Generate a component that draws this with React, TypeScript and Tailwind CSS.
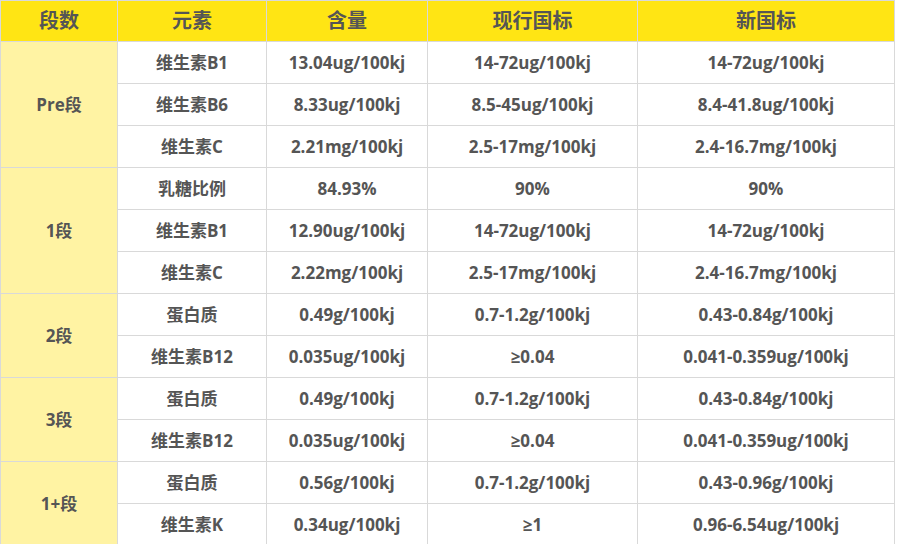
import React from "react";

type Group = {
  stage: string;
  rows: [string, string, string, string][];
};

const groups: Group[] = [
  {
    stage: "Pre段",
    rows: [
      ["维生素B1", "13.04ug/100kj", "14-72ug/100kj", "14-72ug/100kj"],
      ["维生素B6", "8.33ug/100kj", "8.5-45ug/100kj", "8.4-41.8ug/100kj"],
      ["维生素C", "2.21mg/100kj", "2.5-17mg/100kj", "2.4-16.7mg/100kj"],
    ],
  },
  {
    stage: "1段",
    rows: [
      ["乳糖比例", "84.93%", "90%", "90%"],
      ["维生素B1", "12.90ug/100kj", "14-72ug/100kj", "14-72ug/100kj"],
      ["维生素C", "2.22mg/100kj", "2.5-17mg/100kj", "2.4-16.7mg/100kj"],
    ],
  },
  {
    stage: "2段",
    rows: [
      ["蛋白质", "0.49g/100kj", "0.7-1.2g/100kj", "0.43-0.84g/100kj"],
      ["维生素B12", "0.035ug/100kj", "≥0.04", "0.041-0.359ug/100kj"],
    ],
  },
  {
    stage: "3段",
    rows: [
      ["蛋白质", "0.49g/100kj", "0.7-1.2g/100kj", "0.43-0.84g/100kj"],
      ["维生素B12", "0.035ug/100kj", "≥0.04", "0.041-0.359ug/100kj"],
    ],
  },
  {
    stage: "1+段",
    rows: [
      ["蛋白质", "0.56g/100kj", "0.7-1.2g/100kj", "0.43-0.96g/100kj"],
      ["维生素K", "0.34ug/100kj", "≥1", "0.96-6.54ug/100kj"],
    ],
  },
];

const headers = ["段数", "元素", "含量", "现行国标", "新国标"];

export default function App() {
  return (
    <div className="bg-white w-[897px] h-[544px] overflow-hidden font-['Open_Sans','Noto_Sans_CJK_SC',sans-serif] text-[#555555]">
      <table className="table-fixed border-collapse w-[894px] font-bold">
        <colgroup>
          <col className="w-[117px]" />
          <col className="w-[149px]" />
          <col className="w-[161px]" />
          <col className="w-[210px]" />
          <col className="w-[257px]" />
        </colgroup>
        <thead>
          <tr className="h-[41px] bg-[#ffe514]">
            {headers.map((h) => (
              <th key={h} className="border border-[#d9d9d9] p-0 text-[20px] font-bold text-center align-middle leading-none">
                {h}
              </th>
            ))}
          </tr>
        </thead>
        <tbody>
          {groups.map((g) =>
            g.rows.map((r, i) => (
              <tr key={g.stage + i} className="h-[42px]">
                {i === 0 && (
                  <td rowSpan={g.rows.length} className="border border-[#d9d9d9] p-0 bg-[#fff3a3] text-center align-middle text-[17px] leading-none">
                    {g.stage}
                  </td>
                )}
                {r.map((c, j) => (
                  <td key={j} className="border border-[#d9d9d9] p-0 text-center align-middle text-[17px] leading-none">
                    {c}
                  </td>
                ))}
              </tr>
            ))
          )}
        </tbody>
      </table>
    </div>
  );
}
